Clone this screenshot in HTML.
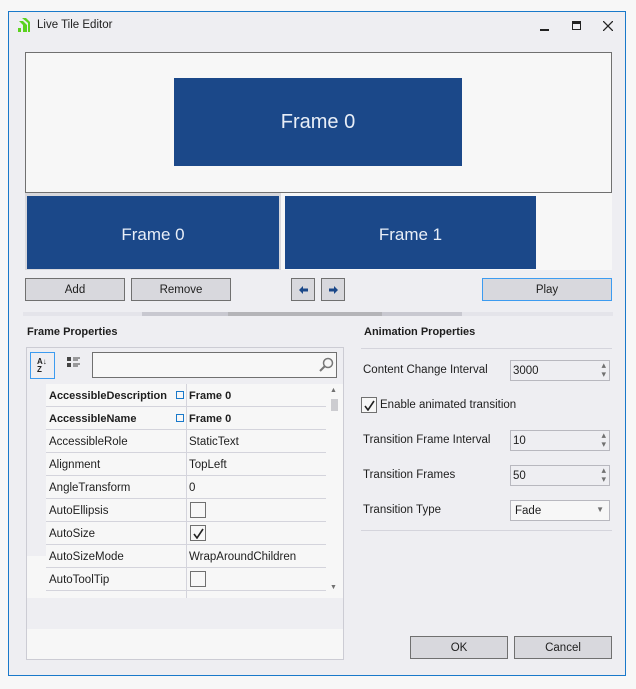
<!DOCTYPE html>
<html><head><style>
*{box-sizing:border-box;margin:0;padding:0}
body{width:636px;height:689px;background:#f7f7f7;position:relative;font-family:"Liberation Sans",sans-serif;font-size:11.5px;color:#1e1e1e;overflow:hidden}
.a{position:absolute}
.win{left:8px;top:11px;width:618px;height:665px;background:#eeeef2;border:1px solid #1979ca}
.btn{position:absolute;background:#d8d8dd;border:1px solid #707070;text-align:center;line-height:22px;height:23px}
.tile{position:absolute;background:#1b4889;color:#e8eef7;text-align:center}
.row{position:absolute;left:46px;width:280px;height:23px;border-bottom:1px solid #d4d4dc;background:#f7f7f7}
.row .n{position:absolute;left:3px;top:6px}
.row .v{position:absolute;left:143px;top:6px}
.row .d{position:absolute;left:140px;top:0;width:1px;height:23px;background:#d4d4dc}
.cb{position:absolute;width:16px;height:16px;border:1px solid #707070;background:#f7f7f7;left:144px;top:3px}
.lbl{position:absolute;left:363px}
.spin{position:absolute;left:510px;width:100px;height:21px;border:1px solid #b8b8bf;background:#eeeef2;padding:4px 2px;font-size:11.5px}
.spin:after{content:"▴\A▾";white-space:pre;position:absolute;right:3px;top:0px;font-size:9px;line-height:9px;color:#707070}
b{font-weight:bold;font-size:11px}
</style></head><body>
<div class="a win"></div>
<svg class="a" style="left:16px;top:17px" width="16" height="16" viewBox="0 0 16 16"><path d="M3 4h4l4 4v7H7V8z M6 1h4l4 4v10h-2V6z" fill="#5bd21f"/><rect x="2" y="11" width="3" height="4" fill="#5bd21f"/></svg>
<div class="a" style="left:37px;top:19px;font-size:11.5px">Live Tile Editor</div>
<div class="a" style="left:540px;top:29px;width:9px;height:2px;background:#222"></div>
<div class="a" style="left:572px;top:21px;width:9px;height:9px;border:1px solid #222;border-top:3px solid #222"></div>
<svg class="a" style="left:603px;top:21px" width="10" height="10"><path d="M0 0L10 10M10 0L0 10" stroke="#222" stroke-width="1.3"/></svg>

<div class="a" style="left:25px;top:52px;width:587px;height:141px;background:#f7f7f7;border:1px solid #707070"></div>
<div class="tile" style="left:174px;top:78px;width:288px;height:88px;font-size:20px;line-height:88px">Frame 0</div>
<div class="a" style="left:25px;top:193px;width:587px;height:77px;background:#f7f7f7"></div>
<div class="a" style="left:25px;top:193px;width:256px;height:77px;background:#d8d8dc"></div>
<div class="tile" style="left:27px;top:196px;width:252px;height:73px;font-size:17px;line-height:77px">Frame 0</div>
<div class="tile" style="left:285px;top:196px;width:251px;height:73px;font-size:17px;line-height:77px">Frame 1</div>

<div class="btn" style="left:25px;top:278px;width:100px">Add</div>
<div class="btn" style="left:131px;top:278px;width:100px">Remove</div>
<div class="btn" style="left:291px;top:278px;width:24px"><svg class="a" style="left:7px;top:7px" width="9" height="8"><path d="M0 4L4 0V2.5H9V5.5H4V8Z" fill="#1b4889"/></svg></div>
<div class="btn" style="left:321px;top:278px;width:24px"><svg class="a" style="left:7px;top:7px" width="9" height="8"><path d="M9 4L5 0V2.5H0V5.5H5V8Z" fill="#1b4889"/></svg></div>
<div class="btn" style="left:482px;top:278px;width:130px;border-color:#3c9bf0">Play</div>
<div class="a" style="left:23px;top:312px;width:590px;height:4px;background:#e4e4ea"></div>
<div class="a" style="left:142px;top:312px;width:320px;height:4px;background:#c8c8d0"></div>
<div class="a" style="left:228px;top:312px;width:154px;height:4px;background:#b4b4b8"></div>

<div class="a" style="left:27px;top:326px;font-weight:bold;font-size:11px">Frame Properties</div>
<div class="a" style="left:26px;top:347px;width:318px;height:313px;border:1px solid #ccccd4;background:#f7f7f7"></div>
<div class="a" style="left:27px;top:348px;width:316px;height:208px;background:#eeeef2"></div>
<div class="a" style="left:30px;top:352px;width:25px;height:27px;border:1px solid #3c9bf0;font-size:8px;font-weight:bold;line-height:8px;padding:5px 0 0 6px">A↓<br>Z</div>
<svg class="a" style="left:67px;top:357px" width="14" height="12"><rect x="0" y="0" width="4" height="4" fill="#444"/><rect x="0" y="6" width="4" height="4" fill="#444"/><path d="M6 1h7M6 3h5M6 7h7M6 9h5" stroke="#444"/></svg>
<div class="a" style="left:92px;top:352px;width:245px;height:26px;border:1px solid #707070;background:#f7f7f7"></div>
<svg class="a" style="left:318px;top:357px" width="16" height="16"><circle cx="10" cy="6" r="4.5" fill="none" stroke="#777" stroke-width="1.5"/><path d="M7 9L2 14" stroke="#777" stroke-width="2"/></svg>

<div class="row" style="top:384px"><div class="n"><b>AccessibleDescription</b></div><div class="a" style="left:130px;top:7px;width:8px;height:8px;border:1px solid #1979ca"></div><div class="d"></div><div class="v"><b>Frame 0</b></div></div>
<div class="row" style="top:407px"><div class="n"><b>AccessibleName</b></div><div class="a" style="left:130px;top:7px;width:8px;height:8px;border:1px solid #1979ca"></div><div class="d"></div><div class="v"><b>Frame 0</b></div></div>
<div class="row" style="top:430px"><div class="n">AccessibleRole</div><div class="d"></div><div class="v">StaticText</div></div>
<div class="row" style="top:453px"><div class="n">Alignment</div><div class="d"></div><div class="v">TopLeft</div></div>
<div class="row" style="top:476px"><div class="n">AngleTransform</div><div class="d"></div><div class="v">0</div></div>
<div class="row" style="top:499px"><div class="n">AutoEllipsis</div><div class="d"></div><div class="cb"></div></div>
<div class="row" style="top:522px"><div class="n">AutoSize</div><div class="d"></div><div class="cb"><svg class="a" style="left:2px;top:2px" width="11" height="11"><path d="M1 6L4 10L10 1" fill="none" stroke="#222" stroke-width="1.6"/></svg></div></div>
<div class="row" style="top:545px"><div class="n">AutoSizeMode</div><div class="d"></div><div class="v">WrapAroundChildren</div></div>
<div class="row" style="top:568px"><div class="n">AutoToolTip</div><div class="d"></div><div class="cb"></div></div>
<div class="row" style="top:591px;height:7px;border:none"><div class="d"></div></div>
<div class="a" style="left:326px;top:384px;width:17px;height:214px;background:#f7f7f7"></div>
<div class="a" style="left:330px;top:387px;font-size:7px;color:#707070">▲</div>
<div class="a" style="left:331px;top:399px;width:7px;height:12px;background:#ccccd0"></div>
<div class="a" style="left:330px;top:584px;font-size:7px;color:#707070">▼</div>
<div class="a" style="left:27px;top:598px;width:316px;height:31px;background:#eeeef2"></div>

<div class="a" style="left:364px;top:326px;font-weight:bold;font-size:11px">Animation Properties</div>
<div class="a" style="left:361px;top:348px;width:251px;height:1px;background:#d4d4dc"></div>
<div class="lbl" style="top:364px">Content Change Interval</div>
<div class="spin" style="top:360px">3000</div>
<div class="a" style="left:361px;top:397px;width:16px;height:16px;border:1px solid #707070;background:#f7f7f7"><svg class="a" style="left:2px;top:2px" width="11" height="11"><path d="M1 6L4 10L10 1" fill="none" stroke="#222" stroke-width="1.6"/></svg></div>
<div class="a" style="left:380px;top:399px">Enable animated transition</div>
<div class="lbl" style="top:434px">Transition Frame Interval</div>
<div class="spin" style="top:430px">10</div>
<div class="lbl" style="top:469px">Transition Frames</div>
<div class="spin" style="top:465px">50</div>
<div class="lbl" style="top:504px">Transition Type</div>
<div class="a" style="left:510px;top:500px;width:100px;height:21px;border:1px solid #b8b8bf;background:#f7f7f7;padding:4px 4px">Fade<span style="position:absolute;right:5px;top:4px;font-size:8px;color:#707070">▼</span></div>
<div class="a" style="left:361px;top:530px;width:251px;height:1px;background:#d4d4dc"></div>

<div class="btn" style="left:410px;top:636px;width:98px">OK</div>
<div class="btn" style="left:514px;top:636px;width:98px">Cancel</div>
</body></html>
